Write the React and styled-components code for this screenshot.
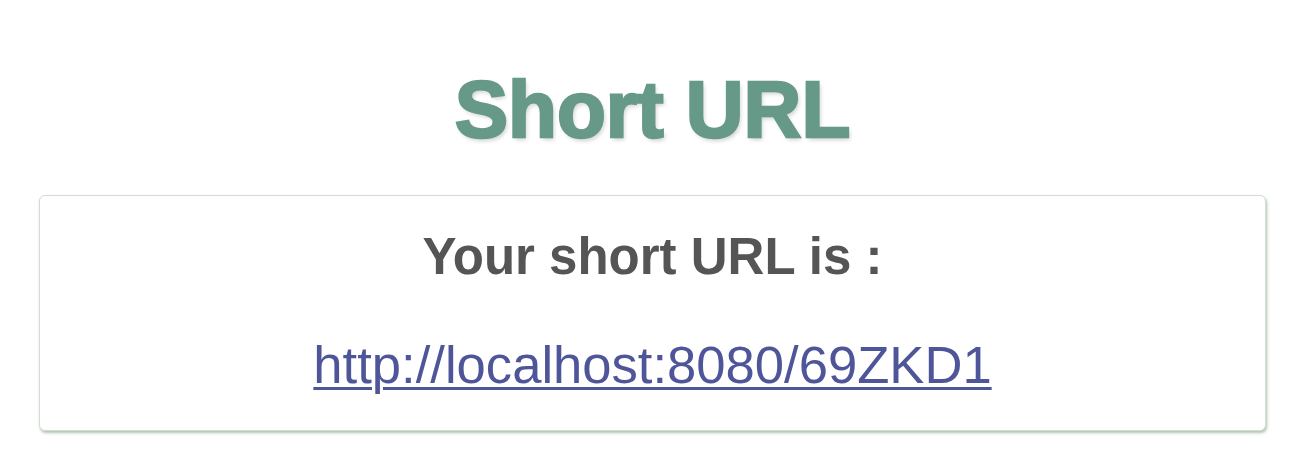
import React from "react";
import styled, { createGlobalStyle } from "styled-components";

const GlobalStyle = createGlobalStyle`
  body {
    margin: 0;
    background-color: #ffffff;
    font-family: "Liberation Sans", Arial, sans-serif;
  }
`;

const PageWrapper = styled.div`
  width: 100%;
  box-sizing: border-box;
  padding: 70px 37px 40px 39px;
  display: flex;
  flex-direction: column;
  align-items: stretch;
  gap: 45px;
`;

const Title = styled.h1`
  margin: 0;
  text-align: center;
  font-size: 80px;
  line-height: 80px;
  font-weight: 700;
  color: #669988;
  -webkit-text-stroke: 2.5px #669988;
  text-shadow: 2px 3px 4px rgba(0, 0, 0, 0.18);
`;

const ResultCard = styled.div`
  display: flex;
  flex-direction: column;
  align-items: center;
  gap: 56px;
  padding: 35px 20px 39px;
  background-color: #ffffff;
  border: 1px solid #d0dfd0;
  border-radius: 6px;
  box-shadow: 1px 2px 3px rgba(100, 135, 100, 0.5);
`;

const ResultTitle = styled.h2`
  margin: 0;
  font-size: 51px;
  line-height: 51px;
  font-weight: 700;
  color: #555555;
`;

const ShortLink = styled.a`
  font-size: 52.6px;
  line-height: 53px;
  color: #4f5599;
  text-decoration: underline;
  text-decoration-thickness: 3px;
  text-underline-offset: 4px;
`;

const App = () => {
  const shortUrl = "http://localhost:8080/69ZKD1";
  return (
    <>
      <GlobalStyle />
      <PageWrapper>
        <Title>Short URL</Title>
        <ResultCard>
          <ResultTitle>Your short URL is :</ResultTitle>
          <ShortLink href={shortUrl}>{shortUrl}</ShortLink>
        </ResultCard>
      </PageWrapper>
    </>
  );
};

export default App;
